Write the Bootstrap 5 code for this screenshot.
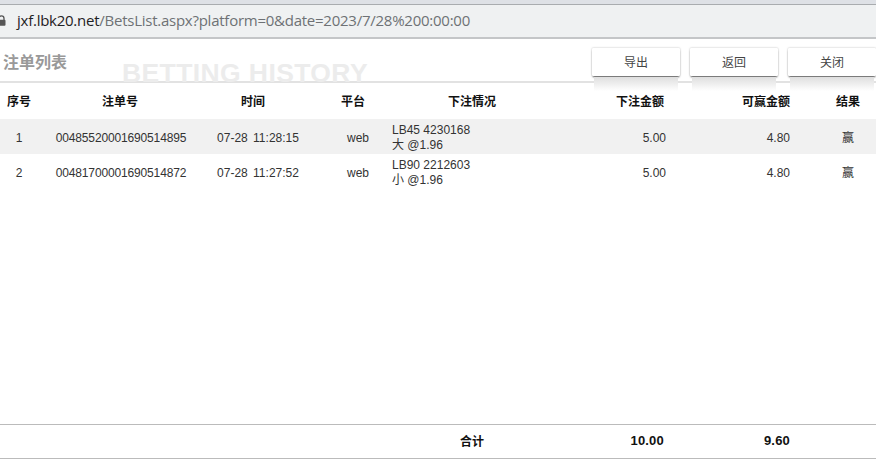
<!DOCTYPE html>
<html lang="zh">
<head>
<meta charset="utf-8">
<title>注单列表</title>
<link rel="stylesheet" href="https://cdn.jsdelivr.net/npm/bootstrap@5.3.0/dist/css/bootstrap.min.css">
<style>
html,body{height:464px;overflow:hidden;background:#fff}
body{font-family:"Liberation Sans","Noto Sans CJK SC",sans-serif;font-size:12px;color:#333}
.chrome{height:35px;background:#eff1f2;border-top:1px solid #a9acaf;margin-top:4px;border-bottom:2px solid #c4c6c8;box-shadow:0 -4px 0 #dee1e6}
.addr{font-family:"Open Sans","Liberation Sans",sans-serif;font-size:15px;line-height:30px;color:#6e7175;margin-left:17px;white-space:nowrap;letter-spacing:-.25px}
.addr b{font-weight:400;color:#1f2124}
.lockicon{position:absolute;left:-3px;top:10px}
.headbar{height:44px;border-bottom:2px solid #e2e2e2;position:relative}
.pagetitle{font-size:16px;font-weight:700;color:#999;margin:0 0 0 3px;line-height:44px;width:119px;flex:none;font-family:"Noto Sans CJK SC",sans-serif}
.mark-text{font-size:26.5px;font-weight:700;color:#ececec;line-height:24px;margin-top:22px;letter-spacing:.4px;white-space:nowrap}
.btnrow{gap:10px;margin-left:auto;padding-top:9px;align-self:flex-start}
.actbtn{width:88px;height:28px;padding:0;border:0;border-radius:1px;background:#fff;color:#444;font-size:12px;line-height:28px;box-shadow:0 2px 2px -1px rgba(0,0,0,.7),0 0 2px rgba(0,0,0,.3);position:relative;font-family:"Noto Sans CJK SC",sans-serif}
.actbtn::after{content:"";position:absolute;left:2px;right:2px;top:29px;height:14px;background:linear-gradient(#dedede,#fff)}
.bets{table-layout:fixed;width:876px;margin:0;border-collapse:collapse}
.bets th,.bets td{padding:0;border:0;background:transparent;font-size:12px;vertical-align:middle}
.bets th{color:#111;font-weight:700;font-family:"Noto Sans CJK SC",sans-serif;height:36px;text-align:center}
.bets .cellright{text-align:right}
.bets td{color:#333;height:35px;line-height:15px;text-align:center;padding-top:3px}
.bets tbody tr.zebra td{background:#f1f1f1}
.bets td.info{text-align:left;padding-top:3px}
.bets .colweb{padding-left:10px}
.bets td.colweb{padding-left:20px}
.bets td.colid{padding-left:2px;letter-spacing:-.15px}
.bets td.coltime{padding-left:10px;word-spacing:2px}
.bets th.padhead{padding-right:2px}
.bets .colres{padding-left:30px}
.bets tr.spacer td{height:235px;padding:0}
.bets tfoot th{height:34px;border-top:1px solid #bbb;border-bottom:1px solid #bbb;font-size:12px}
.bets tfoot th.tot{font-family:"Liberation Sans",sans-serif;font-size:13px;letter-spacing:.2px}
</style>
</head>
<body>
<div class="chrome position-relative">
  <svg class="lockicon" width="9" height="11" viewBox="0 0 9 11"><path d="M2 5V3.4a2.5 2.5 0 0 1 5 0V5" fill="none" stroke="#555" stroke-width="1.3"/><rect x="0.5" y="4.8" width="8" height="6" rx="1" fill="#555"/></svg>
  <div class="addr"><b>jxf.lbk20.net</b>/BetsList.aspx?platform=0&amp;date=2023/7/28%200:00:00</div>
</div>
<div class="headbar d-flex">
  <h1 class="pagetitle">注单列表</h1>
  <div class="mark-text">BETTING HISTORY</div>
  <div class="btnrow d-flex">
    <button class="btn actbtn" type="button">导出</button>
    <button class="btn actbtn" type="button">返回</button>
    <button class="btn actbtn" type="button">关闭</button>
  </div>
</div>
<table class="table bets">
  <colgroup><col style="width:38px"><col style="width:164px"><col style="width:102px"><col style="width:88px"><col style="width:160px"><col style="width:114px"><col style="width:124px"><col style="width:86px"></colgroup>
  <thead><tr><th>序号</th><th>注单号</th><th>时间</th><th class="colweb">平台</th><th>下注情况</th><th class="cellright padhead">下注金额</th><th class="cellright">可赢金额</th><th class="colres">结果</th></tr></thead>
  <tbody>
    <tr class="zebra"><td>1</td><td class="colid">00485520001690514895</td><td class="coltime">07-28 11:28:15</td><td class="colweb">web</td><td class="info">LB45 4230168<br>大 @1.96</td><td class="cellright">5.00</td><td class="cellright">4.80</td><td class="colres">赢</td></tr>
    <tr><td>2</td><td class="colid">00481700001690514872</td><td class="coltime">07-28 11:27:52</td><td class="colweb">web</td><td class="info">LB90 2212603<br>小 @1.96</td><td class="cellright">5.00</td><td class="cellright">4.80</td><td class="colres">赢</td></tr>
    <tr class="spacer"><td colspan="8"></td></tr>
  </tbody>
  <tfoot><tr><th colspan="4"></th><th>合计</th><th class="cellright tot padhead">10.00</th><th class="cellright tot">9.60</th><th></th></tr></tfoot>
</table>
<script src="https://cdn.jsdelivr.net/npm/bootstrap@5.3.0/dist/js/bootstrap.bundle.min.js"></script>
</body>
</html>
